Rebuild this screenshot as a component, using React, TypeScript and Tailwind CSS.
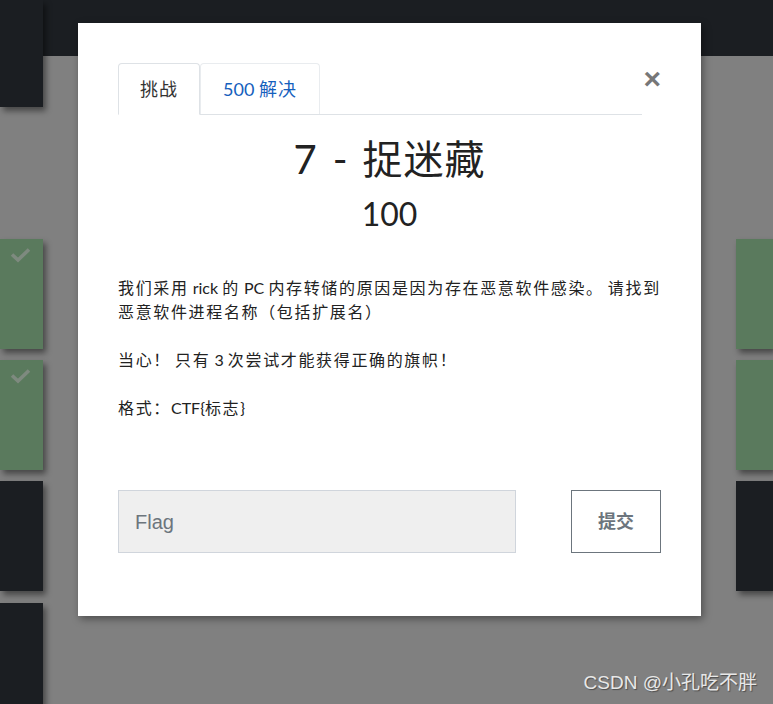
import React from "react";

const Check = () => (
  <svg width="21" height="16" viewBox="0 0 21 16" className="ml-[10px] mt-[8px]">
    <path d="M2 7.5 L8 13 L19 2.5" stroke="#7e8a7f" strokeWidth="3.6" fill="none" strokeLinecap="butt" strokeLinejoin="miter" />
  </svg>
);

const shadow = "shadow-[3px_4px_6px_rgba(0,0,0,0.45)]";

function CJK({ text, cls }: { text: string; cls: string }) {
  const parts = text.split(/([\u3000-\u9fff\uff00-\uffef]+)/);
  return (
    <>
      {parts.map((p, i) =>
        /[\u3000-\u9fff\uff00-\uffef]/.test(p) ? (
          <span key={i} className={cls}>
            {p}
          </span>
        ) : (
          <span key={i}>{p}</span>
        )
      )}
    </>
  );
}

export default function App() {
  const font = { fontFamily: "Lato, 'Noto Sans CJK SC', sans-serif" };
  const tr = "tracking-[1.65px]";
  return (
    <div className="relative w-[773px] h-[704px] overflow-hidden bg-[#808080]" style={font}>
      <div className="flex h-full">
        {/* left column */}
        <div className="w-[43px] flex flex-col shrink-0 z-10">
          <div className={`h-[107px] shrink-0 bg-[#1b1e22] ${shadow}`} />
          <div className={`mt-[132px] h-[110px] shrink-0 bg-[#5a7a5d] ${shadow}`}>
            <Check />
          </div>
          <div className={`mt-[11px] h-[110px] shrink-0 bg-[#5a7a5d] ${shadow}`}>
            <Check />
          </div>
          <div className={`mt-[11px] h-[110px] shrink-0 bg-[#1b1e22] ${shadow}`} />
          <div className={`mt-[12px] h-[110px] shrink-0 bg-[#1b1e22] ${shadow}`} />
        </div>
        {/* middle */}
        <div className="flex-1 flex flex-col">
          <div className="h-[56px] shrink-0 bg-[#1b1e22]" />
        </div>
        {/* right column */}
        <div className="w-[37px] flex flex-col shrink-0">
          <div className="h-[56px] shrink-0 bg-[#1b1e22]" />
          <div className={`mt-[183px] h-[110px] shrink-0 bg-[#5a7a5d] ${shadow}`} />
          <div className={`mt-[11px] h-[110px] shrink-0 bg-[#5a7a5d] ${shadow}`} />
          <div className={`mt-[11px] h-[110px] shrink-0 bg-[#1b1e22] ${shadow}`} />
        </div>
      </div>

      {/* modal */}
      <div className="absolute left-[78px] top-[23px] w-[623px] h-[593px] bg-white z-20 shadow-[2px_3px_8px_rgba(0,0,0,0.4)] px-[40px] pt-[40px]">
        <div
          className="absolute right-[40px] top-[41px] text-[30px] leading-none font-bold text-[#777777]"
          style={{ fontFamily: "'Liberation Sans', Arial, sans-serif" }}
        >
          ×
        </div>
        <div className="flex w-[524px] border-b border-[#dee2e6]">
          <div className="w-[82px] h-[52px] -mb-px flex items-center justify-center bg-white border border-[#dee2e6] border-b-white rounded-t-[4px] text-[18px] text-[#333] tracking-[1px]">
            挑战
          </div>
          <div className="w-[120px] h-[51px] flex items-center justify-center border border-[#e9ecef] border-b-0 rounded-t-[4px] text-[18px] text-[#1560bd]">
            500&nbsp;<span className="tracking-[1px]">解决</span>
          </div>
        </div>
        <div className="mt-[20px] flex justify-center text-[40px] leading-[48px] text-[#222]">
          <span>7</span>
          <span className="ml-[16px] mr-[15px]">-</span>
          <span className="tracking-[1px]">捉迷藏</span>
        </div>
        <div className="mt-[12px] text-center text-[32px] leading-[38px] text-[#222]">100</div>
        <div className="mt-[43px] text-[16px] leading-[24px] text-[#222]">
          <p>
            <CJK cls={tr} text="我们采用 rick 的 PC 内存转储的原因是因为存在恶意软件感染。 请找到恶意软件进程名称（包括扩展名）" />
          </p>
          <p className="mt-[24px]">
            <CJK cls={tr} text="当心！ 只有 3 次尝试才能获得正确的旗帜！" />
          </p>
          <p className="mt-[24px]">
            <CJK cls={tr} text="格式：" />
            CTF{"{"}
            <CJK cls={tr} text="标志" />
            {"}"}
          </p>
        </div>
        <div className="mt-[70px] flex">
          <div
            className="w-[398px] h-[63px] bg-[#efefef] border border-[#d0d5dc] flex items-center pl-[16px] text-[20px] text-[#6c757d]"
            style={{ fontFamily: "'Liberation Sans', Arial, sans-serif" }}
          >
            Flag
          </div>
          <div className="ml-[55px] w-[90px] h-[63px] border border-[#6c757d] flex items-center justify-center text-[18px] font-bold text-[#6c757d]">
            提交
          </div>
        </div>
      </div>

      <div
        className="absolute right-[16px] bottom-[7px] z-30 text-[19px] text-[#e8e8e8] [text-shadow:1px_1px_1px_rgba(0,0,0,0.4)]"
        style={{ fontFamily: "'Liberation Sans', 'Noto Sans CJK SC', sans-serif" }}
      >
        CSDN @小孔吃不胖
      </div>
    </div>
  );
}
